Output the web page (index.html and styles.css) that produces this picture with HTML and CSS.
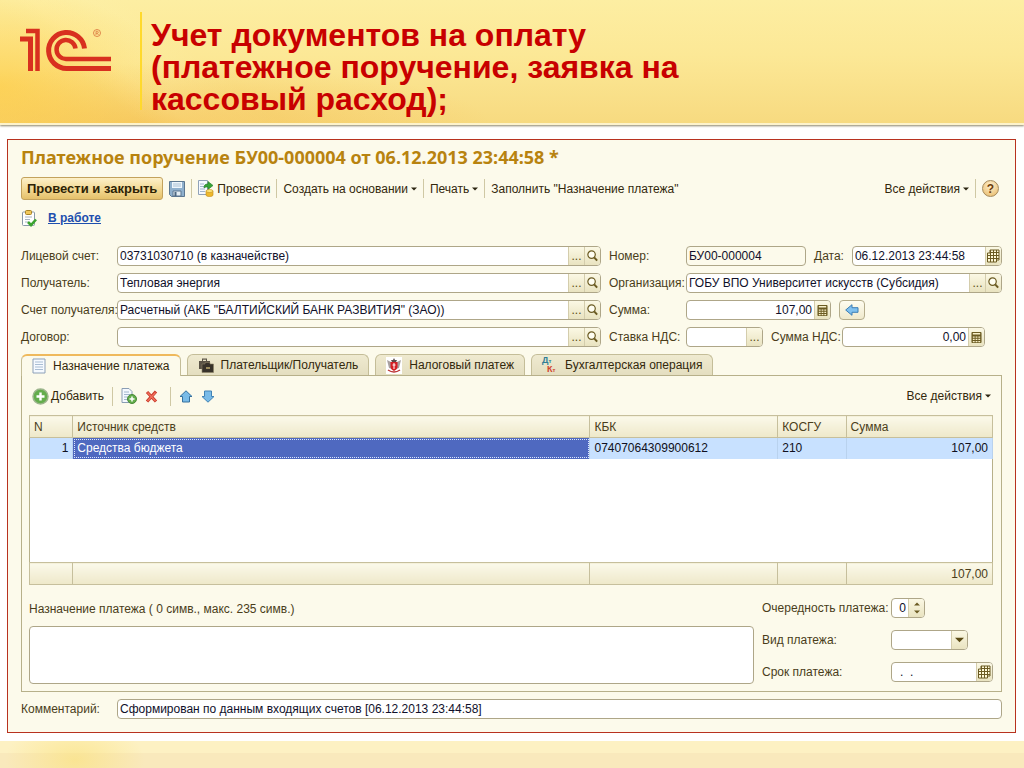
FILE: index.html
```html
<!DOCTYPE html>
<html lang="ru">
<head>
<meta charset="utf-8">
<title>Учет документов на оплату</title>
<link rel="stylesheet" href="styles.css">
</head>
<body>
<svg class="defs" aria-hidden="true">
  <symbol id="mag" viewBox="0 0 14 14"><circle cx="6" cy="5.500" r="4" fill="#fffef2" stroke="#6b5b22" stroke-width="1.300"/><path d="M8.800 8.500l3.200 3.500" stroke="#6b5b22" stroke-width="2.200"/></symbol>
  <symbol id="calc" viewBox="0 0 12 13"><rect x="0.500" y="0.500" width="11" height="12" rx="1" fill="#6b5b22"/><path d="M2 2.500h8" stroke="#f7efc8" stroke-width="1.600"/><path d="M2 6h2m1 0h2m1 0h2M2 8.500h2m1 0h2m1 0h2M2 11h2m1 0h2m1 0h2" stroke="#f7efc8" stroke-width="1.300"/></symbol>
  <symbol id="cal" viewBox="0 0 13 14"><path d="M3 1h9v10h-2.500v2h-9v-9h2.500z" fill="#fff9d8" stroke="#6b5b22"/><path d="M.5 6.500h11.500M.5 9.500h11.500M3.500 3.500h8.500M3.500 1v12M6.500 1v12M9.500 1v12" stroke="#6b5b22"/></symbol>
  <symbol id="down" viewBox="0 0 6 4"><path d="M0 .5h6L3 3.500z" fill="#2b2410"/></symbol>
  <symbol id="sheet" viewBox="0 0 14 16"><path d="M1 1h12v14h-12z" fill="#f6faff" stroke="#8da0b8"/><path d="M3 4h8M3 6.500h8M3 9h8M3 11.500h8" stroke="#a9bdd3"/></symbol>
</svg>

<header class="banner">
  <svg class="logo" viewBox="0 0 92 44" role="img" aria-label="1С">
    <g fill="none" stroke="#d8301f" stroke-width="5">
      <path d="M6 3h11.500v40" stroke-width="4.500"/>
      <path d="M0 11h10.500v32"/>
      <path d="M64.500 20.500a18 18 0 1 0-17.500 20H91"/>
      <path d="M55.500 20.500a9.500 9.500 0 1 0-9 10.500H91" stroke-width="4.500"/>
    </g>
    <circle cx="77" cy="5" r="3.500" fill="none" stroke="#d8703a" stroke-width=".8"/>
    <path d="M76 7V3.300h1.300a1 1 0 0 1 0 2H76m1.300 0L78.500 7" fill="none" stroke="#d8703a" stroke-width=".7"/>
  </svg>
  <h1>Учет документов на оплату<br>(платежное поручение, заявка на<br>кассовый расход);</h1>
</header>

<main class="window">
  <h2>Платежное поручение БУ00-000004 от 06.12.2013 23:44:58 *</h2>

  <div class="toolbar main-bar">
    <button class="primary">Провести и закрыть</button>
    <button class="tool save" aria-label="Записать"><svg width="16" height="16" viewBox="0 0 16 16"><path d="M.5.5h15v15h-13l-2-2z" fill="#8fb0cd" stroke="#5c7790"/><path d="M3 1h10v6H3z" fill="#eef6fc"/><path d="M4 3h8M4 5h8" stroke="#a9c0d4"/><path d="M4 10h8v5H4z" fill="#e4eef5" stroke="#5c7790"/><path d="M5.500 11h2v4h-2z" fill="#4c6780"/></svg></button>
    <i class="sep"></i>
    <button class="tool"><svg width="16" height="17" viewBox="0 0 16 17"><path d="M.5.5h9v14h-9z" fill="#f5f9ff" stroke="#90a2b9"/><path d="M2 4h4M2 6.500h4M2 9h5M2 11.500h5" stroke="#a2b6cd"/><path d="M6 8c0-3 1-4 4-4V1.500l5 4-5 4V7C8 7 7 7 6 8z" fill="#35a436" stroke="#23752a" stroke-width=".6"/><path d="M8 11v4c0 2 7 2 7 0v-4z" fill="#efb92d" stroke="#bd8815" stroke-width=".6"/><ellipse cx="11.500" cy="11" rx="3.500" ry="1.500" fill="#ffe67c" stroke="#bd8815" stroke-width=".6"/></svg>Провести</button>
    <i class="sep"></i>
    <button class="tool">Создать на основании<svg class="arr"><use href="#down"/></svg></button>
    <i class="sep"></i>
    <button class="tool">Печать<svg class="arr"><use href="#down"/></svg></button>
    <i class="sep"></i>
    <button class="tool">Заполнить "Назначение платежа"</button>
    <span class="grow"></span>
    <button class="tool">Все действия<svg class="arr"><use href="#down"/></svg></button>
    <i class="sep"></i>
    <button class="help" aria-label="Справка">?</button>
  </div>

  <div class="state">
    <svg width="16" height="17" viewBox="0 0 16 17"><rect x="1.500" y="2" width="12" height="13.500" rx="1" fill="#fff" stroke="#8899a8"/><rect x="4.500" y=".5" width="6" height="4" rx="1" fill="#f0c75a" stroke="#a98324"/><path d="M4 7h7M4 9.500h5M4 12h3" stroke="#a9b5c2"/><path d="M7 12l3 3 5-5.500" fill="none" stroke="#3ba32f" stroke-width="2.600"/></svg>
    <a href="#">В работе</a>
  </div>

  <form class="form">
    <label for="acc">Лицевой счет:</label>
    <div class="field"><input id="acc" value="03731030710 (в казначействе)"><button type="button" aria-label="Выбрать">...</button><button type="button" aria-label="Открыть"><svg class="i14"><use href="#mag"/></svg></button></div>
    <label for="num">Номер:</label>
    <div class="group">
      <div class="field w-num locked"><input id="num" value="БУ00-000004" readonly></div>
      <label for="date">Дата:</label>
      <div class="field flex"><input id="date" value="06.12.2013 23:44:58"><button type="button" aria-label="Календарь"><svg class="i14"><use href="#cal"/></svg></button></div>
    </div>

    <label for="rcv">Получатель:</label>
    <div class="field"><input id="rcv" value="Тепловая энергия"><button type="button" aria-label="Выбрать">...</button><button type="button" aria-label="Открыть"><svg class="i14"><use href="#mag"/></svg></button></div>
    <label for="org">Организация:</label>
    <div class="field"><input id="org" value="ГОБУ ВПО Университет искусств (Субсидия)"><button type="button" aria-label="Выбрать">...</button><button type="button" aria-label="Открыть"><svg class="i14"><use href="#mag"/></svg></button></div>

    <label for="racc">Счет получателя:</label>
    <div class="field"><input id="racc" value="Расчетный (АКБ &quot;БАЛТИЙСКИЙ БАНК РАЗВИТИЯ&quot; (ЗАО))"><button type="button" aria-label="Выбрать">...</button><button type="button" aria-label="Открыть"><svg class="i14"><use href="#mag"/></svg></button></div>
    <label for="sum">Сумма:</label>
    <div class="group">
      <div class="field w-sum"><input id="sum" class="right" value="107,00"><button type="button" aria-label="Калькулятор"><svg class="i12"><use href="#calc"/></svg></button></div>
      <button type="button" class="back" aria-label="Подставить"><svg width="14" height="12" viewBox="0 0 14 12"><path d="M.7 6L7 .7v3h6v4.600H7v3z" fill="#7fc0ee" stroke="#3b7db5"/></svg></button>
    </div>

    <label for="dog">Договор:</label>
    <div class="field"><input id="dog"><button type="button" aria-label="Выбрать">...</button><button type="button" aria-label="Открыть"><svg class="i14"><use href="#mag"/></svg></button></div>
    <label for="vat">Ставка НДС:</label>
    <div class="group vat">
      <div class="field w-vat"><input id="vat"><button type="button" aria-label="Выбрать">...</button></div>
      <label for="vsum">Сумма НДС:</label>
      <div class="field flex"><input id="vsum" class="right" value="0,00"><button type="button" aria-label="Калькулятор"><svg class="i12"><use href="#calc"/></svg></button></div>
    </div>
  </form>

  <div class="tabs" role="tablist">
    <button role="tab" class="tab active" aria-selected="true"><svg width="14" height="16"><use href="#sheet"/></svg>Назначение платежа</button>
    <button role="tab" class="tab"><svg width="16" height="16" viewBox="0 0 16 16"><path d="M1 4h3V1.500h5V4h3v8H1z" fill="#5a5346"/><path d="M5 4h3V2.700H5z" fill="#e9e3c8"/><path d="M4 7h3V5.500h5V7h3.500v8.500H4z" fill="#37322a" stroke="#8c8265" stroke-width=".6"/><path d="M8 10h4v2H8z" fill="#9b8c5c"/></svg>Плательщик/Получатель</button>
    <button role="tab" class="tab"><svg width="16" height="17" viewBox="0 0 16 17"><path d="M0 0h16v17H0z" fill="#fff"/><path d="M1 3l4 2 1 3v4l-3-1zM15 3l-4 2-1 3v4l3-1z" fill="#a8a0a0"/><path d="M4.500 5h7v5c0 2-2 3-3.500 4-1.500-1-3.500-2-3.500-4z" fill="#d51f25"/><path d="M5 3h2l1-2 1 2h2L10 5H6z" fill="#5c4a4a"/><path d="M8 6v6M6.500 8h3" stroke="#fff"/><path d="M2 13q6 4 12 0" fill="none" stroke="#b33" stroke-width="1.500"/></svg>Налоговый платеж</button>
    <button role="tab" class="tab"><span class="dk" aria-hidden="true"><b>Д<small>т</small></b><b class="kt">К<small>т</small></b></span>Бухгалтерская операция</button>
  </div>

  <section class="page" role="tabpanel">
    <div class="toolbar sub">
      <button class="tool"><svg width="17" height="17" viewBox="0 0 17 17"><circle cx="8.500" cy="8.500" r="7.500" fill="#63ad4c" stroke="#9cb58c" stroke-width="1.500"/><path d="M8.500 4.500v8M4.500 8.500h8" stroke="#fff" stroke-width="2.400"/></svg>Добавить</button>
      <i class="sep"></i>
      <button class="tool" aria-label="Скопировать"><svg width="16" height="16" viewBox="0 0 16 16"><path d="M1 .5h7l3 3v11H1z" fill="#f5f9ff" stroke="#8a9db4"/><path d="M3 4h5M3 6.500h6M3 9h4M3 11.500h4" stroke="#a2b6cd"/><circle cx="11" cy="11" r="4.500" fill="#63ad4c" stroke="#4a8a39"/><path d="M11 8.500v5M8.500 11h5" stroke="#fff" stroke-width="1.500"/></svg></button>
      <button class="tool" aria-label="Удалить"><svg width="13" height="13" viewBox="0 0 13 13"><path d="M2 2l9 9.500M11 1.500L2 11.500" stroke="#c93a2b" stroke-width="3.200"/><path d="M2.500 2.500l8 8.500M10.500 2.500l-8 8.500" stroke="#f0705c" stroke-width="1.400"/></svg></button>
      <i class="sep"></i>
      <button class="tool" aria-label="Вверх"><svg width="14" height="13" viewBox="0 0 14 13"><path d="M7 .8l6 5.700h-2.500V12h-7V6.500H1z" fill="#79bbe8" stroke="#35709f"/></svg></button>
      <button class="tool" aria-label="Вниз"><svg width="14" height="13" viewBox="0 0 14 13"><path d="M7 12.200L1 6.500h2.500V1h7v5.500H13z" fill="#79bbe8" stroke="#4283b5"/></svg></button>
      <span class="grow"></span>
      <button class="tool">Все действия<svg class="arr"><use href="#down"/></svg></button>
    </div>

    <table class="grid">
      <colgroup><col class="c1"><col class="c2"><col class="c3"><col class="c4"><col class="c5"></colgroup>
      <thead><tr><th>N</th><th>Источник средств</th><th>КБК</th><th>КОСГУ</th><th>Сумма</th></tr></thead>
      <tbody>
        <tr class="sel"><td class="r">1</td><td class="cur">Средства бюджета</td><td>07407064309900612</td><td>210</td><td class="r">107,00</td></tr>
        <tr class="empty"><td colspan="5"></td></tr>
      </tbody>
      <tfoot><tr><td></td><td></td><td></td><td></td><td class="r">107,00</td></tr></tfoot>
    </table>

    <div class="bottom">
      <div class="purpose">
        <label for="purpose">Назначение платежа ( 0 симв., макс. 235 симв.)</label>
        <textarea id="purpose"></textarea>
      </div>
      <div class="extra">
        <label for="prio">Очередность платежа:</label>
        <div class="field w-prio"><input id="prio" class="right" value="0"><button type="button" class="spin" aria-label="Изменить"><svg width="6" height="12" viewBox="0 0 6 12"><path d="M0 3.500h6L3 .5zM0 8.500h6l-3 3z" fill="#6b5b22"/></svg></button></div>
        <label for="kind">Вид платежа:</label>
        <div class="field w-kind"><select id="kind"><option></option></select><span class="drop"><svg width="9" height="6" viewBox="0 0 6 4"><path d="M0 .5h6L3 3.500z" fill="#5a4a14"/></svg></span></div>
        <label for="due">Срок платежа:</label>
        <div class="field"><input id="due" class="due" value=".  ."><button type="button" aria-label="Календарь"><svg class="i14"><use href="#cal"/></svg></button></div>
      </div>
    </div>
  </section>

  <div class="comment">
    <label for="com">Комментарий:</label>
    <div class="field"><input id="com" value="Сформирован по данным входящих счетов [06.12.2013 23:44:58]"></div>
  </div>
</main>
<footer class="strip"></footer>
</body>
</html>
```
FILE: styles.css
```css
* { box-sizing: border-box; }
body {
  margin: 0;
  min-height: 100vh;
  display: flex;
  flex-direction: column;
  background: #fff;
  color: #4a3d1a;
  font: 12px/16px "Liberation Sans", Arial, sans-serif;
}
button, input, select, textarea { font: inherit; color: inherit; margin: 0; }
button { padding: 0; border: 0; background: none; white-space: nowrap; }
svg { flex: none; }
.defs { position: absolute; width: 0; height: 0; }

.banner {
  display: flex;
  height: 125px;
  padding: 12px 20px 13px;
  border-bottom: 2px solid #fdf3cc;
  box-shadow: 0 1px 2px #8c8468;
  background:
    radial-gradient(ellipse 170px 100px at 0 70%, rgba(255, 203, 60, .6), transparent),
    radial-gradient(ellipse 340px 60px at 150px 100%, rgba(245, 180, 60, .45), transparent),
    linear-gradient(38deg, transparent 0 12%, rgba(255, 243, 175, .35) 16%, transparent 24%),
    linear-gradient(#fdeea2, #fce896 45%, #f7da80);
}
.logo { width: 92px; height: 44px; margin-top: 16px; }
.banner h1 {
  margin: 0 0 0 28px;
  padding: 7px 0 0 9px;
  border-left: 2px solid #ffd92c;
  color: #c80000;
  font-size: 32px;
  line-height: 32px;
}

.window {
  margin: 14px 8px 0 7px;
  padding: 6px 13px 13px;
  border: 1px solid #b8321f;
  background: #fcfaeb;
}
.window h2 {
  margin: 0 0 9px;
  color: #b8830f;
  font: bold 18px/22px "Noto Sans", "Open Sans", sans-serif;
}

.toolbar { display: flex; align-items: center; }
.toolbar .grow { flex: 1; }
.tool { display: flex; align-items: center; gap: 3px; color: #33280c; }
.arr { width: 6px; height: 4px; }
.sep { width: 1px; height: 19px; background: #cfc8a4; }
.main-bar { gap: 6px; height: 23px; }
.primary {
  height: 23px;
  padding: 0 5px;
  border: 1px solid #c3a25c;
  border-radius: 3px;
  background: linear-gradient(#fdf0c8, #f1d68e 60%, #e5c06a);
  color: #2d2205;
  font-weight: bold;
  font-size: 13px;
}
.help {
  width: 17px;
  height: 17px;
  margin-right: 3px;
  border: 1px solid #a58a5c;
  border-radius: 50%;
  background: radial-gradient(circle at 50% 30%, #fff0cf, #e6b866);
  color: #6b3c0c;
  font-weight: bold;
  font-size: 12px;
  line-height: 14px;
}

.state { display: flex; align-items: center; gap: 11px; height: 36px; }
.state a { color: #1e4fae; font-weight: bold; }

.form {
  display: grid;
  grid-template-columns: 96px minmax(0, 484px) 85px minmax(0, 1fr);
  row-gap: 7px;
  align-items: center;
  margin-top: 10px;
}
.form > label:nth-of-type(even) { padding-left: 8px; }
label { white-space: nowrap; }
.group { display: flex; align-items: center; gap: 8px; min-width: 0; }
.group label { flex: none; }
.group .flex { flex: 1; }
.vat { margin-right: 17px; }
.vat .flex { margin-left: -7px; }
.field {
  display: flex;
  height: 20px;
  min-width: 0;
  border: 1px solid #aea688;
  border-radius: 4px;
  background: #fff;
  overflow: hidden;
}
.field input, .field select {
  flex: 1;
  width: 0;
  min-width: 0;
  padding: 0 2px;
  border: 0;
  background: none;
  color: #10102a;
  appearance: none;
  outline: 0;
}
.field .right { text-align: right; }
.field button, .drop {
  flex: none;
  display: grid;
  place-items: center;
  width: 16px;
  border-left: 1px solid #d4cdac;
  background: linear-gradient(#fbf8e4, #e9e3c0);
  color: #5a4a14;
}
.locked { background: #fcfaeb; }
.i14 { width: 13px; height: 14px; }
.i12 { width: 11px; height: 13px; }
.w-num { flex: 0 1 120px; }
.w-sum { flex: 0 1 145px; }
.w-vat { flex: 0 1 77px; }
.back {
  display: grid;
  place-items: center;
  width: 26px;
  height: 20px;
  border: 1px solid #b5ad8c;
  border-radius: 4px;
  background: linear-gradient(#fffdf0, #efe9cc);
}

.tabs { display: flex; gap: 6px; margin-top: 7px; }
.tab {
  display: flex;
  align-items: center;
  gap: 7px;
  height: 21px;
  padding: 0 10px;
  border: 1px solid #c4bd98;
  border-bottom: 0;
  border-radius: 6px 6px 0 0;
  background: linear-gradient(#efead0, #e4dec0);
  color: #33280c;
}
.tab.active {
  height: 22px;
  margin-bottom: -1px;
  border-top: 2px solid #efb95c;
  background: #fcfaeb;
}
.dk { display: flex; flex-direction: column; width: 16px; color: #2f7d96; font-size: 9px; line-height: 9px; }
.dk small { font-size: 6px; line-height: 6px; }
.dk b { height: 9px; text-align: left; }
.dk .kt { padding-left: 5px; color: #d1422c; }

.page { padding: 9px 8px 7px 7px; border: 1px solid #b7b08a; }
.sub { gap: 8px; height: 22px; padding: 0 2px 0 3px; }
.sub .tool { gap: 2px; }
.sub [aria-label] + [aria-label] { padding-right: 4px; }
.sub .grow + .tool { gap: 3px; }

.grid {
  width: 100%;
  margin-top: 8px;
  border: 1px solid #b7b08a;
  border-collapse: collapse;
  table-layout: fixed;
  background: #fff;
}
.c1 { width: 4.5%; }
.c2 { width: 53.7%; }
.c3 { width: 19.5%; }
.c4 { width: 7.1%; }
.c5 { width: 15.2%; }
.grid th, .grid td { padding: 0 4px; text-align: left; font-weight: normal; }
.grid th, .grid tfoot td {
  height: 22px;
  border: 1px solid #c6bf9c;
  background: linear-gradient(#fbf9ea, #eee8c9);
}
.grid .r { text-align: right; }
.grid .sel td { height: 21px; background: #c8e1ff; color: #101020; border-right: 1px solid #b9d2ee; }
.grid .sel .cur { background: #4f69c0; color: #fff; outline: 1px dotted #dce6ff; outline-offset: -2px; }
.grid .empty td { height: 104px; }

.bottom { display: flex; gap: 8px; margin-top: 13px; }
.purpose { flex: 1; display: flex; flex-direction: column; gap: 9px; padding-top: 3px; }
.purpose textarea {
  height: 58px;
  border: 1px solid #aea688;
  border-radius: 4px;
  background: #fff;
  resize: none;
}
.extra {
  display: grid;
  grid-template-columns: 129px 102px;
  grid-template-rows: 20px 20px 20px;
  row-gap: 12px;
  align-items: center;
}
.w-prio { width: 34px; }
.w-kind { width: 77px; }
.field .due { padding-left: 8px; white-space: pre; }

.comment { display: grid; grid-template-columns: 96px 1fr; align-items: center; margin-top: 7px; }

.strip {
  flex: 1;
  min-height: 27px;
  margin-top: 8px;
  background:
    radial-gradient(ellipse 70px 40px at 75px 70%, rgba(250, 225, 120, .6), transparent),
    linear-gradient(#fdf1c3 0 12px, #f9e9bc 12px);
}
```
